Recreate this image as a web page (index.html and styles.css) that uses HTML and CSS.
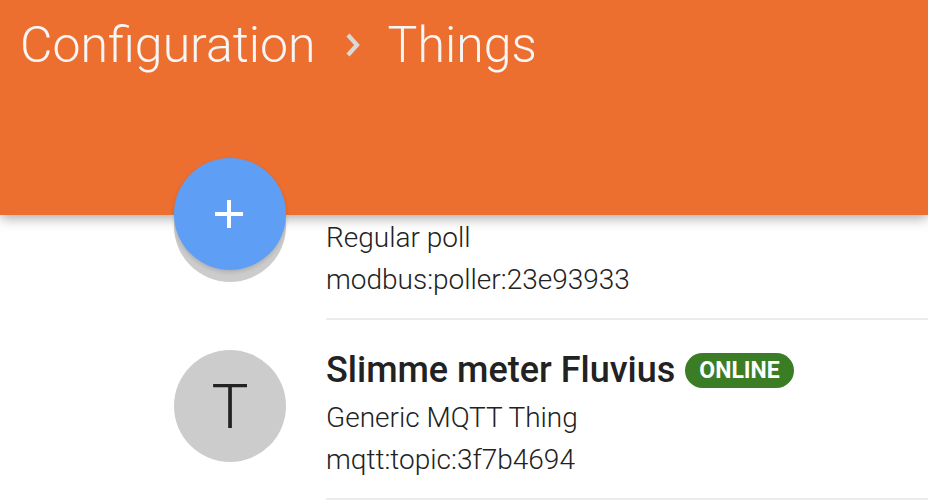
FILE: index.html
```html
<!DOCTYPE html>
<html>
<head>
<meta charset="utf-8">
<link rel="stylesheet" href="styles.css">
</head>
<body>
<header class="appbar">
  <h1 class="crumbs">
    <span class="crumb">Configuration</span>
    <svg class="chev" width="18" height="26" viewBox="0 0 18 26"><path d="M4 3 L13 13 L4 23" fill="none" stroke="#d9d9d9" stroke-width="4.2"/></svg>
    <span class="crumb">Things</span>
  </h1>
</header>
<button class="fab" aria-label="Add">
  <svg width="30" height="30" viewBox="0 0 30 30"><path d="M15 1 V29 M1 15 H29" stroke="#fff" stroke-width="4"/></svg>
</button>
<main class="list">
  <div class="row">
    <div class="avatar"></div>
    <div class="body">
      <div class="title-spacer"></div>
      <div class="sub">Regular poll</div>
      <div class="sub">modbus:poller:23e93933</div>
    </div>
  </div>
  <div class="row">
    <div class="avatar">T</div>
    <div class="body">
      <div class="title">Slimme meter Fluvius <span class="badge">ONLINE</span></div>
      <div class="sub">Generic MQTT Thing</div>
      <div class="sub">mqtt:topic:3f7b4694</div>
    </div>
  </div>
</main>
</body>
</html>
```
FILE: styles.css
```css
html, body {
  margin: 0;
  padding: 0;
  background: #fff;
  overflow: hidden;
}
body {
  font-family: Roboto, "Liberation Sans", sans-serif;
  width: 928px;
  height: 502px;
  position: relative;
}
.appbar {
  position: fixed;
  top: 0;
  left: 0;
  right: 0;
  height: 215px;
  background: #ec6f2f;
  box-shadow: 0 3px 12px rgba(0,0,0,0.35);
  z-index: 2;
}
.crumbs {
  margin: 0;
  padding: 14px 0 0 20px;
  display: flex;
  align-items: center;
  font-weight: 300;
  font-size: 50px;
  line-height: 62px;
  color: #f6f6f6;
}
.chev {
  margin: 0 26px 0 28px;
}
.fab {
  position: absolute;
  left: 174px;
  top: 158px;
  width: 112px;
  height: 112px;
  border-radius: 50%;
  border: 0;
  padding: 0;
  background: #5f9ef5;
  display: flex;
  align-items: center;
  justify-content: center;
  z-index: 3;
  box-shadow: 0 2px 4px rgba(0,0,0,0.15);
}
.fab svg {
  margin-left: -2px;
}
.list {
  padding-top: 140px;
}
.row {
  display: flex;
  padding-left: 174px;
}
.avatar {
  flex: 0 0 112px;
  height: 112px;
  margin-top: 30px;
  border-radius: 50%;
  background: #cccccc;
  color: #222;
  font-weight: 300;
  font-size: 62px;
  display: flex;
  align-items: center;
  justify-content: center;
}
.body {
  flex: 1;
  margin-left: 40px;
  padding: 26px 0 17px;
  border-bottom: 2px solid #ececec;
}
.title-spacer {
  height: 48px;
  margin-bottom: 3px;
}
.title {
  height: 48px;
  margin-bottom: 3px;
  display: flex;
  align-items: center;
  font-size: 36px;
  font-weight: 500;
  color: #222;
}
.badge {
  margin-left: 10px;
  background: #3a7d24;
  color: #fff;
  font-size: 23px;
  font-weight: 700;
  border-radius: 18px;
  height: 35px;
  padding: 0 14px;
  display: inline-flex;
  align-items: center;
}
.sub {
  height: 42px;
  line-height: 42px;
  font-size: 28px;
  font-weight: 300;
  color: #222;
}
```
